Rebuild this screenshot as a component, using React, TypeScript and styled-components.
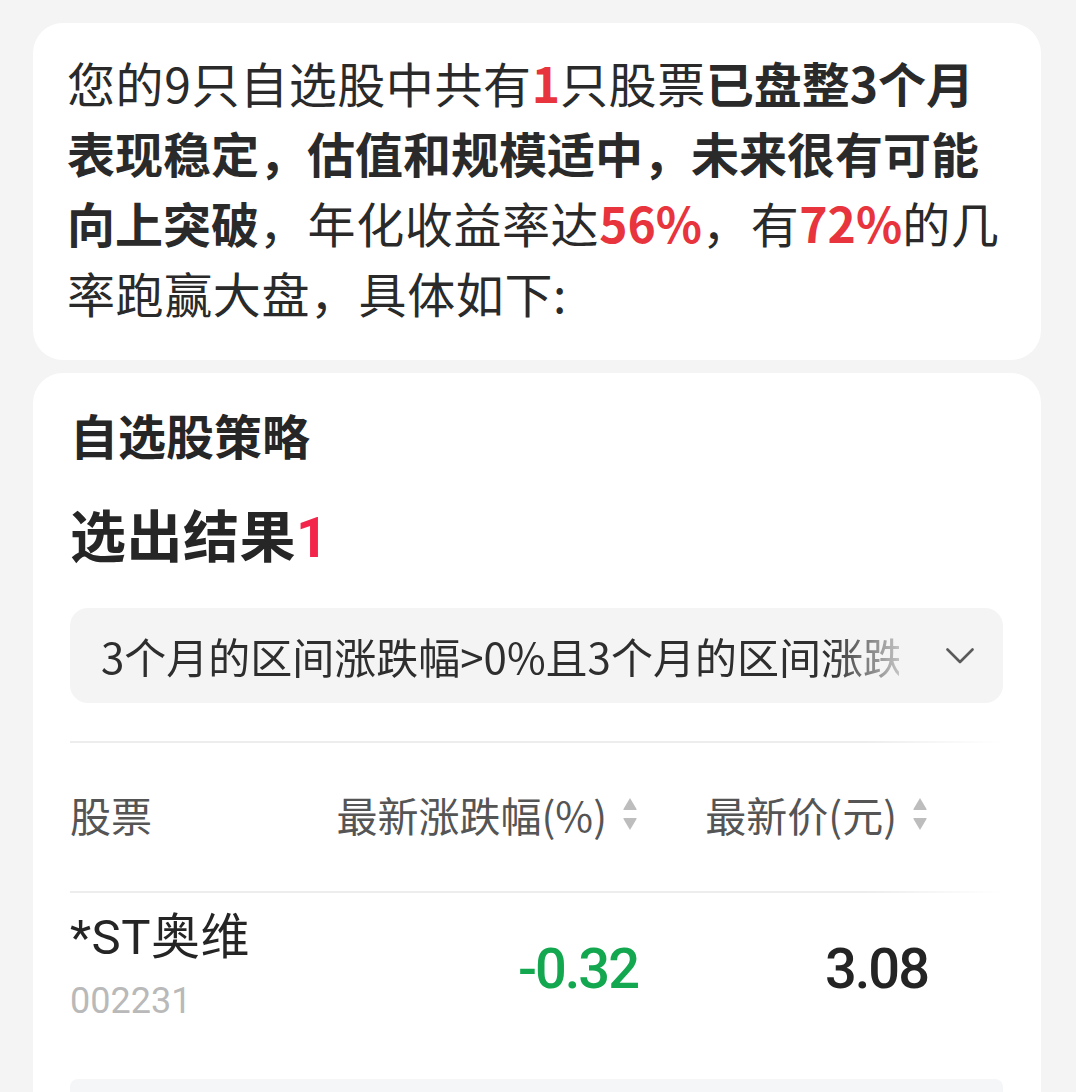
import React from "react";
import styled, { createGlobalStyle } from "styled-components";

const Global = createGlobalStyle`
  html, body {
    margin: 0;
    padding: 0;
    background: #f4f4f4;
  }
  body {
    font-family: "Noto Sans CJK SC", "Noto Sans", sans-serif;
    color: #222;
  }
`;

const Page = styled.div`
  display: flex;
  flex-direction: column;
  gap: 13px;
  padding: 23px 35px 0 33px;
  height: 1092px;
  box-sizing: border-box;
  overflow: hidden;
`;

const Card = styled.section<{ $pad: string }>`
  background: #fff;
  border-radius: 30px;
  padding: ${(p) => p.$pad};
`;

const Intro = styled.p`
  margin: 0;
  font-size: 48px;
  line-height: 70px;
  letter-spacing: 0.6px;
  color: #2a2a2a;
`;

const Strong = styled.b`
  font-weight: 700;
  letter-spacing: 0;
`;

const Hi = styled.b`
  font-weight: 700;
  letter-spacing: 0;
  color: #e8343c;
`;

const Title = styled.h2`
  margin: 0;
  font-size: 48px;
  line-height: 64px;
  font-weight: 700;
  color: #262626;
`;

const Result = styled.h1`
  margin: 31px 0 0;
  font-size: 56px;
  line-height: 72px;
  font-weight: 700;
  letter-spacing: 0.5px;
  color: #262626;
`;

const Count = styled.span`
  color: #f3254b;
  font-family: Roboto, sans-serif;
`;

const Select = styled.div`
  margin-top: 34px;
  height: 95px;
  border-radius: 18px;
  background: #f4f4f4;
  display: flex;
  align-items: center;
  padding: 0 29px 0 31px;
  box-sizing: border-box;
`;

const SelectText = styled.span`
  width: 798px;
  overflow: hidden;
  white-space: nowrap;
  font-size: 42px;
  color: #2e2e2e;
  -webkit-mask-image: linear-gradient(to right, #000 calc(100% - 70px), rgba(0, 0, 0, 0.25) 100%);
  mask-image: linear-gradient(to right, #000 calc(100% - 70px), rgba(0, 0, 0, 0.25) 100%);
`;

const Chevron = styled.svg`
  margin-left: auto;
  width: 28px;
  height: 16px;
`;

const Divider = styled.div<{ $top?: number }>`
  height: 2px;
  margin-top: ${(p) => p.$top ?? 0}px;
  background: linear-gradient(to right, #ededed 85%, rgba(237, 237, 237, 0) 100%);
`;

const Row = styled.div<{ $h: number; $lift?: number }>`
  display: grid;
  grid-template-columns: 250px 318px 290px;
  height: ${(p) => p.$h}px;
  box-sizing: border-box;
  padding-bottom: ${(p) => p.$lift ?? 0}px;
  align-items: center;
`;

const Head = styled.div<{ $right?: boolean }>`
  display: flex;
  align-items: center;
  justify-content: ${(p) => (p.$right ? "flex-end" : "flex-start")};
  gap: 15px;
  white-space: nowrap;
  font-size: 41px;
  color: #555;
`;

const SortIcon = styled.svg`
  width: 16px;
  height: 36px;
  flex: none;
`;

const NameCell = styled.div`
  align-self: start;
  padding-top: 17px;
  display: flex;
  flex-direction: column;
  gap: 13px;
`;

const Name = styled.div`
  font-family: Roboto, "Noto Sans CJK SC", sans-serif;
  font-size: 49px;
  line-height: 56px;
  letter-spacing: 0.5px;
  white-space: nowrap;
  color: #252525;
`;

const Code = styled.div`
  font-family: Roboto, sans-serif;
  font-size: 36px;
  line-height: 44px;
  color: #b9b9b9;
`;

const Value = styled.div<{ $color: string }>`
  align-self: start;
  padding-top: 44px;
  text-align: right;
  font-family: Roboto, sans-serif;
  font-weight: 500;
  font-size: 56px;
  line-height: 64px;
  letter-spacing: -2px;
  color: ${(p) => p.$color};
`;

const More = styled.div`
  height: 80px;
  background: #f5f6f8;
  border-radius: 8px 8px 0 0;
`;

const Sort = () => (
  <SortIcon viewBox="0 0 16 36">
    <path d="M8 2 L14.5 13 Q15 14 14 14 L2 14 Q1 14 1.5 13 Z" fill="#bdbdbd" />
    <path d="M8 34 L14.5 23 Q15 22 14 22 L2 22 Q1 22 1.5 23 Z" fill="#bdbdbd" />
  </SortIcon>
);

export default function App() {
  return (
    <>
      <Global />
      <Page>
        <Card $pad="24px 30px 33px 34px">
          <Intro>
            您的9只自选股中共有<Hi>1</Hi>只股票<Strong>已盘整3个月表现稳定，估值和规模适中，未来很有可能向上突破</Strong>，年化收益率达<Hi>56%</Hi>，有<Hi>72%</Hi>的几率跑赢大盘，具体如下:
          </Intro>
        </Card>
        <Card $pad="29px 38px 0 37px">
          <Title>自选股策略</Title>
          <Result>
            选出结果<Count>1</Count>
          </Result>
          <Select>
            <SelectText>3个月的区间涨跌幅&gt;0%且3个月的区间涨跌幅</SelectText>
            <Chevron viewBox="0 0 28 16">
              <polyline points="1.5,1.5 14,14 26.5,1.5" fill="none" stroke="#5a5a5a" strokeWidth="2.6" strokeLinecap="round" strokeLinejoin="round" />
            </Chevron>
          </Select>
          <Divider $top={38} />
          <Row $h={148} $lift={6}>
            <Head>股票</Head>
            <Head $right>
              最新涨跌幅(%)
              <Sort />
            </Head>
            <Head $right>
              最新价(元)
              <Sort />
            </Head>
          </Row>
          <Divider />
          <Row $h={186}>
            <NameCell>
              <Name>*ST奥维</Name>
              <Code>002231</Code>
            </NameCell>
            <Value $color="#13a74f">-0.32</Value>
            <Value $color="#242424">3.08</Value>
          </Row>
          <More />
        </Card>
      </Page>
    </>
  );
}
